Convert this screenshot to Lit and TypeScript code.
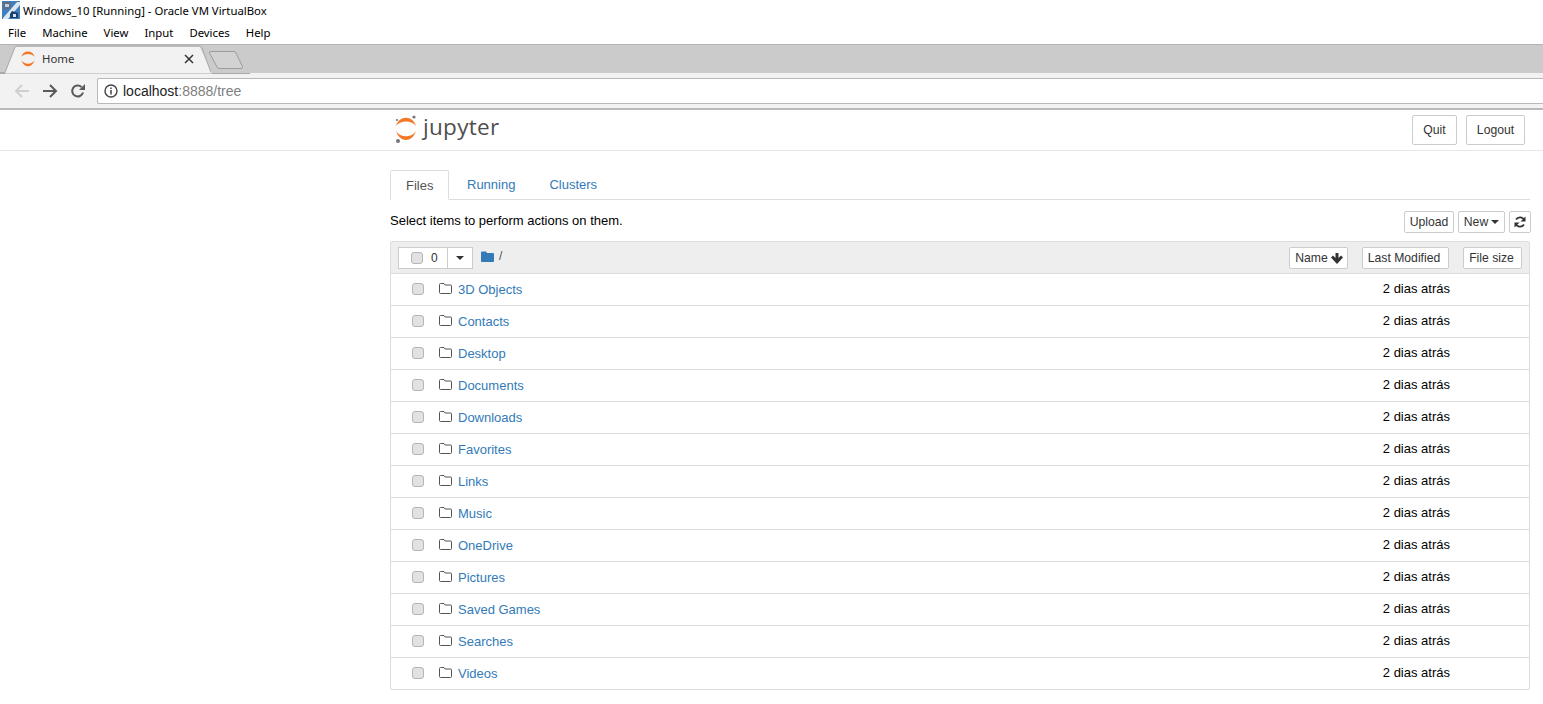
import { LitElement, html, css, svg } from "lit";
import { customElement } from "lit/decorators.js";

const folders = ["3D Objects", "Contacts", "Desktop", "Documents", "Downloads", "Favorites", "Links", "Music", "OneDrive", "Pictures", "Saved Games", "Searches", "Videos"];

// arcs span x 2..22 of the 24 wide box, favicon is the same shape without the moons
const jupyterMark = (w: number, moons: boolean) => html`
  <svg width=${w} height=${(w * 30) / 24} viewBox="0 0 24 30">
    <path d="M2 12C5 1 19 1 22 12C18 6 6 6 2 12Z" fill="#f37726"/>
    <path d="M2 17C6 29 18 29 22 17C18 24 6 24 2 17Z" fill="#f37726"/>
    ${moons
      ? svg`<circle cx="20" cy="3" r="1.600" fill="#767677"/><circle cx="3" cy="6" r="1.100" fill="#767677"/><circle cx="4" cy="27" r="2" fill="#767677"/>`
      : ""}
  </svg>`;

@customElement("app-root")
export class AppRoot extends LitElement {
  static styles = css`
    :host {
      display: block;
      height: 704px;
      overflow: hidden;
      background: #fff;
      font-family: "Liberation Sans", Arial, sans-serif;
      font-size: 13px;
      color: #000;
    }
    .win {
      font-family: "Noto Sans", "Open Sans", sans-serif;
      font-size: 11.35px;
    }
    .titlebar {
      height: 22px;
      display: flex;
      align-items: center;
      gap: 3px;
      padding-left: 2px;
      padding-bottom: 2px;
      box-sizing: border-box;
    }
    .menubar {
      height: 22px;
      display: flex;
      align-items: center;
      gap: 16px;
      padding-left: 8px;
      padding-bottom: 2px;
      box-sizing: border-box;
    }
    .strip {
      position: relative;
      height: 29px;
      background: #cbcbcb;
      box-sizing: border-box;
      border-top: 1px solid #b4b4b4;
    }
    .tabshape {
      position: absolute;
      left: 0;
      top: 0;
    }
    .tablabel {
      position: absolute;
      left: 20px;
      top: 0;
      width: 174px;
      height: 27px;
      display: flex;
      align-items: center;
      gap: 6px;
      color: #333;
    }
    .tablabel .close {
      margin-left: auto;
      display: flex;
    }
    .toolbar {
      background: #f2f2f2;
      display: flex;
      align-items: flex-start;
      box-sizing: border-box;
      border-bottom: 2px solid #b9b9b9;
      height: 37px;
    }
    .nav {
      width: 97px;
      height: 35px;
      flex: none;
      display: flex;
      align-items: center;
      gap: 12px;
      padding-left: 14px;
      box-sizing: border-box;
    }
    .omnibox {
      flex: 1;
      margin-top: 5px;
      height: 26px;
      background: #fff;
      border: 1px solid #b8b8b8;
      border-right: none;
      border-radius: 2px 0 0 2px;
      display: flex;
      align-items: center;
      padding-left: 6px;
      gap: 5px;
      font-size: 14px;
      box-sizing: border-box;
      color: #222;
    }
    .omnibox span span {
      color: #808080;
    }
    .header {
      height: 41px;
      box-sizing: border-box;
      border-bottom: 1px solid #e7e7e7;
      display: flex;
      align-items: flex-start;
    }
    .logo {
      margin-left: 394px;
      margin-top: 4px;
      display: flex;
      gap: 5px;
      align-items: center;
    }
    .logo b {
      font-family: "Open Sans", sans-serif;
      font-weight: 400;
      font-size: 22.5px;
      color: #4e4e4e;
      line-height: 28px;
      letter-spacing: 0.3px;
      margin-top: -4px;
    }
    .hbtns {
      margin-left: auto;
      margin-right: 18px;
      margin-top: 5px;
      display: flex;
      gap: 9px;
    }
    .btn {
      box-sizing: border-box;
      border: 1px solid #ccc;
      border-radius: 2px;
      background: #fff;
      color: #333;
      font-size: 12.2px;
      display: flex;
      align-items: center;
      justify-content: center;
      gap: 3px;
    }
    .hbtns .btn {
      height: 30px;
    }
    main {
      width: 1140px;
      margin-left: 390px;
    }
    .tabs {
      margin-top: 19px;
      height: 30px;
      box-sizing: border-box;
      border-bottom: 1px solid #ddd;
      display: flex;
      font-size: 13px;
      color: #337ab7;
    }
    .tabs div {
      height: 30px;
      box-sizing: border-box;
      padding: 6px 16px 0;
      line-height: 18px;
    }
    .tabs .active {
      width: 59px;
      padding-left: 15px;
      border: 1px solid #ddd;
      border-bottom-color: #fff;
      border-radius: 2px 2px 0 0;
      color: #555;
      margin-right: 2px;
    }
    .tabs .clusters {
      padding-left: 18px;
    }
    .tools {
      height: 41px;
      display: flex;
      align-items: flex-start;
    }
    .tools p {
      margin: 11px 0 0;
      line-height: 20px;
      color: #000;
      font-size: 13px;
    }
    .tbtns {
      margin-left: auto;
      margin-right: -1px;
      margin-top: 11px;
      display: flex;
      gap: 4px;
    }
    .tbtns .btn,
    .cols .btn {
      height: 22px;
    }
    .cols .name {
      width: 59px;
      padding-left: 1px;
    }
    .cols .modified {
      width: 87px;
      margin-left: 14px;
      padding-right: 3px;
    }
    .cols .size {
      width: 59px;
      margin-left: 14px;
      padding-right: 2px;
    }
    .list {
      border: 1px solid #ddd;
      border-radius: 2px;
    }
    .listhead {
      height: 31px;
      background: #eee;
      border-bottom: 1px solid #ddd;
      display: flex;
      align-items: flex-start;
      padding-left: 7px;
    }
    .selector {
      margin-top: 5px;
      width: 75px;
      height: 22px;
      box-sizing: border-box;
      border: 1px solid #ccc;
      background: #fff;
      display: flex;
      align-items: center;
      font-size: 12px;
      color: #333;
    }
    .selector .left {
      width: 49px;
      height: 100%;
      display: flex;
      align-items: center;
      box-sizing: border-box;
      border-right: 1px solid #ccc;
      padding-left: 12px;
      gap: 8px;
    }
    .selector .right {
      flex: 1;
      display: flex;
      justify-content: center;
    }
    .caret {
      width: 0;
      height: 0;
      border-top: 4px solid #333;
      border-left: 4px solid transparent;
      border-right: 4px solid transparent;
      display: inline-block;
    }
    .check {
      width: 12px;
      height: 12px;
      box-sizing: border-box;
      flex: none;
      background: #e2e2e2;
      border: 1px solid #b5b5b5;
      border-radius: 3px;
    }
    .crumb {
      margin-left: 8px;
      margin-top: 4px;
      display: flex;
      align-items: center;
      gap: 5px;
      height: 20px;
      color: #555;
      font-size: 12px;
    }
    .cols {
      margin-left: auto;
      margin-top: 5px;
      margin-right: 7px;
      display: flex;
    }
    .row {
      height: 29px;
      padding-bottom: 2px;
      border-bottom: 1px solid #ddd;
      display: flex;
      align-items: center;
      padding-left: 21px;
    }
    .row:last-child {
      border-bottom: none;
    }
    .row a {
      color: #337ab7;
      text-decoration: none;
      margin-left: 6px;
      position: relative;
      top: 1px;
    }
    .row .check {
      margin-right: 15px;
    }
    .row .when {
      margin-left: auto;
      margin-right: 79px;
      color: #000;
    }
  `;

  render() {
    return html`
      <div class="win titlebar">
        <svg width="18" height="18" viewBox="0 0 18 18">
          <rect width="18" height="18" fill="#3f7fbd"/>
          <path d="M1 1H9V8H1Z" fill="#5c6f86"/>
          <path d="M3 3H7V6H3Z" fill="#c3d0de"/>
          <path d="M1 17L15 1H18V4L6 18H1Z" fill="#dbe8f4"/>
          <path d="M10 10L16 12V17H8V13Z" fill="#1c3f6b"/>
          <path d="M11 13H14V16H11Z" fill="#d6e2ee"/>
        </svg>
        <span>Windows_10 [Running] - Oracle VM VirtualBox</span>
      </div>
      <div class="win menubar">
        <span>File</span><span>Machine</span><span>View</span><span>Input</span><span>Devices</span><span>Help</span>
      </div>
      <div class="win strip">
        <svg class="tabshape" width="250" height="29" viewBox="0 0 250 29">
          <path d="M0 28.500H250" stroke="#a8a8a8"/>
          <path d="M1 28.500H5L15 2H200L212 28.500H2Z" fill="#f2f2f2"/>
          <path d="M0 27.500H5L15 2Q15.500 1 18 1H199Q201 1 202 3L211 27.500" fill="none" stroke="#a8a8a8"/>
          <path d="M209.500 8Q209 6.500 211 6.500H234Q235.500 6.500 236 8L242.500 21.500Q243 23.500 241 23.500H219Q217.500 23.500 217 22Z" fill="#d2d2d2" stroke="#9c9c9c"/>
        </svg>
        <div class="tablabel">
          ${jupyterMark(16, false)}
          <span>Home</span>
          <span class="close">
            <svg width="10" height="10" viewBox="0 0 10 10"><path d="M1 1L9 9M9 1L1 9" stroke="#333" stroke-width="1.500"/></svg>
          </span>
        </div>
      </div>
      <div class="toolbar">
        <div class="nav">
          <svg width="16" height="16" viewBox="0 0 16 16"><path d="M15 8H2M8 2L2 8L8 14" fill="none" stroke="#d0d0d0" stroke-width="2"/></svg>
          <svg width="16" height="16" viewBox="0 0 16 16"><path d="M1 8H14M8 2L14 8L8 14" fill="none" stroke="#5a5a5a" stroke-width="2"/></svg>
          <svg width="16" height="16" viewBox="0 0 16 16"><path d="M13 9.500A5.500 5.500 0 1 1 11.500 4" fill="none" stroke="#5a5a5a" stroke-width="2"/><path d="M9 7H15V1Z" fill="#5a5a5a"/></svg>
        </div>
        <div class="omnibox">
          <svg width="14" height="14" viewBox="0 0 14 14"><circle cx="7" cy="7" r="6" fill="none" stroke="#444" stroke-width="1.400"/><path d="M7 6V10.500M7 3.400V5" stroke="#444" stroke-width="1.500"/></svg>
          <span>localhost<span>:8888/tree</span></span>
        </div>
      </div>
      <div class="header">
        <div class="logo">${jupyterMark(24, true)}<b>jupyter</b></div>
        <div class="hbtns">
          <div class="btn" style="width:45px">Quit</div>
          <div class="btn" style="width:59px">Logout</div>
        </div>
      </div>
      <main>
        <div class="tabs">
          <div class="active">Files</div>
          <div>Running</div>
          <div class="clusters">Clusters</div>
        </div>
        <div class="tools">
          <p>Select items to perform actions on them.</p>
          <div class="tbtns">
            <div class="btn" style="width:50px">Upload</div>
            <div class="btn" style="width:47px">New <span class="caret"></span></div>
            <div class="btn" style="width:22px">
              <svg width="12" height="12" viewBox="0 0 12 12"><path d="M10.500 4.500A4.800 4.800 0 0 0 2 3.500M1.500 7.500A4.800 4.800 0 0 0 10 8.500" fill="none" stroke="#333" stroke-width="1.800"/><path d="M11.500 0.500V5.500H6.500ZM0.500 11.500V6.500H5.500Z" fill="#333"/></svg>
            </div>
          </div>
        </div>
        <div class="list">
          <div class="listhead">
            <div class="selector">
              <div class="left"><span class="check"></span>0</div>
              <div class="right"><span class="caret"></span></div>
            </div>
            <div class="crumb">
              <svg width="13" height="11" viewBox="0 0 13 11"><path d="M0 1.500Q0 .5 1 .5H5L6 2H12Q13 2 13 3V10Q13 11 12 11H1Q0 11 0 10Z" fill="#337ab7"/></svg>
              <span>/</span>
            </div>
            <div class="cols">
              <div class="btn name">Name
                <svg width="12" height="11" viewBox="0 0 12 11"><path d="M4.500 0H7.500V5L10 2.500L12 4.500L6 11L0 4.500L2 2.500L4.500 5Z" fill="#333"/></svg>
              </div>
              <div class="btn modified">Last Modified</div>
              <div class="btn size">File size</div>
            </div>
          </div>
          ${folders.map(
            (name) => html`
              <div class="row">
                <span class="check"></span>
                <svg width="13" height="11" viewBox="0 0 13 11"><path d="M.5 1.500Q.5 .5 1.500 .5H5L6 2H11.500Q12.500 2 12.500 3V9.500Q12.500 10.500 11.500 10.500H1.500Q.5 10.500 .5 9.500Z" fill="none" stroke="#555"/></svg>
                <a>${name}</a>
                <span class="when">2 dias atrás</span>
              </div>
            `
          )}
        </div>
      </main>
    `;
  }
}
